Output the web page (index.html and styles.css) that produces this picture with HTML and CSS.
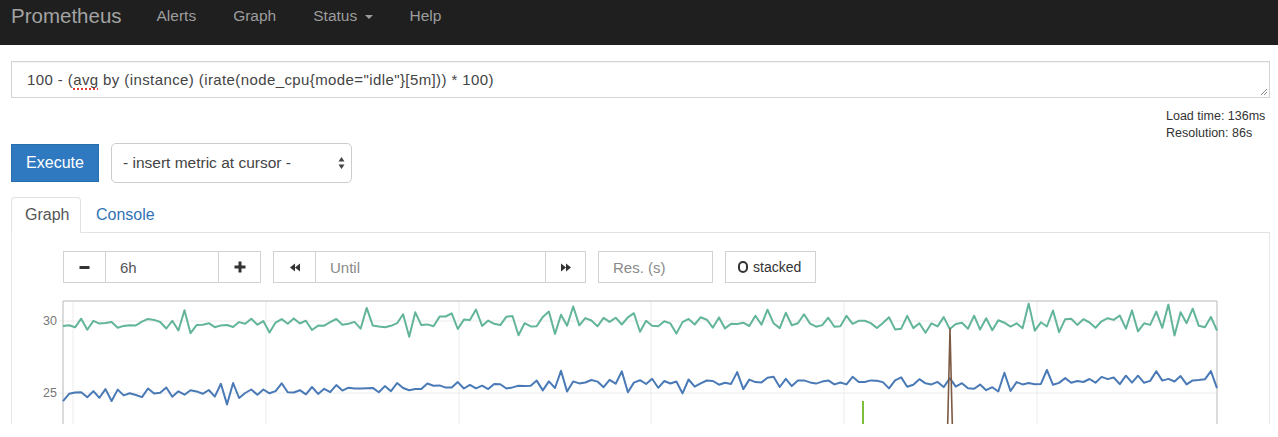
FILE: index.html
```html
<!DOCTYPE html>
<html>
<head>
<meta charset="utf-8">
<title>Prometheus Time Series Collection and Processing Server</title>
<link rel="stylesheet" href="styles.css">
</head>
<body>
<div class="page">
  <nav class="navbar">
    <a class="brand">Prometheus</a>
    <ul class="nav">
      <li>Alerts</li>
      <li>Graph</li>
      <li>Status <span class="caret"></span></li>
      <li>Help</li>
    </ul>
  </nav>
  <main class="container">
    <div class="expr">100 - (<span class="spell">avg</span>&nbsp;by (instance) (irate(node_cpu{mode="idle"}[5m])) * 100)<svg class="grip" width="7" height="7" viewBox="0 0 7 7"><path d="M1 7 L7 1 M4 7 L7 4" stroke="#888" stroke-width="1"/></svg></div>
    <div class="meta-row"><div class="meta">Load time: 136ms<br>Resolution: 86s</div></div>
    <div class="exec-row">
      <button class="btn-exec">Execute</button>
      <div class="select"><span>- insert metric at cursor -</span><svg class="arrows" width="7" height="14" viewBox="0 0 7 14"><path d="M3.5 1 L6.5 5.5 L0.5 5.5 Z M3.5 13 L6.5 8.5 L0.5 8.5 Z" fill="#444"/></svg></div>
    </div>
    <div class="tabs">
      <div class="tab active">Graph</div>
      <div class="tab link">Console</div>
    </div>
    <div class="panel">
      <div class="controls">
        <div class="group">
          <span class="btn sq"><svg width="11" height="11" viewBox="0 0 11 11"><rect x="0.5" y="4" width="10" height="3" fill="#333"/></svg></span>
          <span class="field range">6h</span>
          <span class="btn sq"><svg width="12" height="12" viewBox="0 0 12 12"><path d="M4.5 0.5h3v4h4v3h-4v4h-3v-4h-4v-3h4z" fill="#333"/></svg></span>
        </div>
        <div class="group">
          <span class="btn sq back"><svg width="10" height="9" viewBox="0 0 10 9"><path d="M0 4.5 L5 0.5 V8.5 Z M5 4.5 L10 0.5 V8.5 Z" fill="#333"/></svg></span>
          <span class="field until ph">Until</span>
          <span class="btn sq fwd"><svg width="10" height="9" viewBox="0 0 10 9"><path d="M10 4.5 L5 0.5 V8.5 Z M5 4.5 L0 0.5 V8.5 Z" fill="#333"/></svg></span>
        </div>
        <span class="field res ph">Res. (s)</span>
        <span class="btn stacked"><svg width="10" height="12" viewBox="0 0 10 12"><rect x="1" y="1" width="8" height="10" rx="4" fill="none" stroke="#333" stroke-width="2"/></svg>stacked</span>
      </div>
      <div class="graph">
        <svg id="chart" width="1195" height="140" viewBox="0 0 1195 140">
          <g class="grid">
            <line x1="43" y1="8" x2="43" y2="140"/>
            <line x1="236" y1="8" x2="236" y2="140"/>
            <line x1="429" y1="8" x2="429" y2="140"/>
            <line x1="621" y1="8" x2="621" y2="140"/>
            <line x1="814" y1="8" x2="814" y2="140"/>
            <line x1="1007" y1="8" x2="1007" y2="140"/>
            <line x1="29" y1="28" x2="1187" y2="28"/>
            <line x1="29" y1="100" x2="1187" y2="100"/>
          </g>
          <g class="frame">
            <line x1="33" y1="8" x2="1187" y2="8"/>
            <line x1="33" y1="8" x2="33" y2="140"/>
            <line x1="1187" y1="8" x2="1187" y2="140"/>
          </g>
          <text class="ylabel" x="27" y="32">30</text>
          <text class="ylabel" x="27" y="104">25</text>
          <polyline id="s-blue" class="series blue" points=""/>
          <polyline id="s-green" class="series green" points=""/>
          <polyline class="series lime" points="833,108 833,140"/>
          <polyline class="series brown" points="917.5,140 920,36 922.5,140"/>
        </svg>
      </div>
    </div>
  </main>
</div>
<script src="script.js"></script>
</body>
</html>
```

FILE: styles.css
```css
* { box-sizing: border-box; }
html, body { margin: 0; padding: 0; background: #fff; }
body {
  font-family: "Liberation Sans", Arial, Helvetica, sans-serif;
  color: #333;
  font-size: 14px;
}
.page { height: 424px; overflow: hidden; }

.navbar {
  height: 45px;
  background: #1f1f1f;
  display: flex;
  align-items: flex-start;
  padding: 4px 0 0 11px;
  color: #9d9d9d;
}
.brand { font-size: 20.5px; line-height: 24px; color: #a3a3a3; }
.nav {
  list-style: none;
  margin: 2px 0 0 35px;
  padding: 0;
  display: flex;
  gap: 37px;
  font-size: 15.5px;
  line-height: 20px;
}
.caret {
  display: inline-block;
  width: 0; height: 0;
  margin-left: 3px;
  vertical-align: middle;
  border-top: 4px solid #9d9d9d;
  border-left: 4px solid transparent;
  border-right: 4px solid transparent;
}

.container { padding: 16px 8px 0 11px; }

.expr {
  position: relative;
  height: 37px;
  border: 1px solid #d4d4d4;
  box-shadow: inset 0 1px 1px rgba(0,0,0,.05);
  display: flex;
  align-items: center;
  padding: 0 15px;
  font-size: 15px;
  letter-spacing: 0.4px;
  color: #444;
  white-space: pre;
}
.spell {
  text-decoration: underline dotted #e03a3a;
  text-decoration-thickness: 2px;
  text-underline-offset: 3px;
}
.grip { position: absolute; right: 2px; bottom: 2px; }

.meta-row { display: flex; justify-content: flex-end; margin-top: 10px; }
.meta { width: 104px; font-size: 12.5px; line-height: 17px; color: #333; }

.exec-row { display: flex; align-items: center; gap: 12px; margin-top: 1px; height: 40px; }
.btn-exec {
  width: 88px; height: 38px;
  background: #2f79c0;
  border: 1px solid #2a6dad;
  color: #fff;
  font-family: inherit;
  font-size: 16px;
  padding: 0;
}
.select {
  width: 241px; height: 40px;
  border: 1px solid #ccc;
  border-radius: 5px;
  display: flex;
  align-items: center;
  justify-content: space-between;
  padding: 0 6px 0 11px;
  font-size: 15.5px;
  color: #444;
  background: #fff;
}

.tabs {
  margin-top: 14px;
  display: flex;
  height: 36px;
  border-bottom: 1px solid #e2e2e2;
}
.tab {
  height: 36px;
  padding: 0 13px;
  display: flex;
  align-items: center;
  font-size: 16px;
  border: 1px solid transparent;
  border-radius: 4px 4px 0 0;
}
.tab.active {
  width: 70px;
  border-color: #e2e2e2 #e2e2e2 #fff;
  color: #555;
  background: #fff;
}
.tab.link { color: #3273b5; padding-left: 14px; }

.panel {
  border: 1px solid #e6e6e6;
  border-top: none;
  height: 300px;
  padding-top: 18px;
}
.controls { display: flex; margin-left: 51px; gap: 12px; height: 32px; }
.group { display: flex; }
.btn, .field {
  height: 32px;
  border: 1px solid #d2d2d2;
  display: flex;
  align-items: center;
  background: #fff;
}
.group > * + * { margin-left: -1px; }
.btn.sq { width: 43px; justify-content: center; }
.btn.back { width: 43px; }
.btn.fwd { width: 41px; }
.field { padding: 0 14px; font-size: 15px; color: #555; }
.field.range { width: 114px; }
.field.until { width: 231px; }
.field.res { width: 115px; }
.ph { color: #8a8a8a; }
.btn.stacked {
  width: 91px;
  padding-left: 12px;
  font-size: 14px;
  color: #333;
  gap: 5px;
}

.graph { margin: 10px 0 0 18px; }
#chart { display: block; }
.grid line { stroke: #ececec; stroke-width: 1; }
.frame line { stroke: #cfcfcf; stroke-width: 1.5; }
.ylabel { font-family: "Liberation Sans", Arial, sans-serif; font-size: 12.5px; fill: #777; text-anchor: end; }
.series { fill: none; stroke-width: 2; stroke-linejoin: round; }
.series.green { stroke: #62b49b; }
.series.blue { stroke: #4a7ab6; }
.series.lime { stroke: #7cbd3c; }
.series.brown { stroke: #7d5a43; stroke-width: 1.6; }
```

FILE: script.js
```js
(function () {
  var seed = 12345;
  function r() {
    seed = (seed * 1103515245 + 12345) & 0x7fffffff;
    return seed / 0x7fffffff;
  }
  function interp(pts, x) {
    for (var i = 0; i < pts.length - 1; i++) {
      if (x <= pts[i + 1][0]) {
        var t = (x - pts[i][0]) / (pts[i + 1][0] - pts[i][0]);
        return pts[i][1] + t * (pts[i + 1][1] - pts[i][1]);
      }
    }
    return pts[pts.length - 1][1];
  }
  var x0 = 33, x1 = 1187, n = 190;
  var dx = (x1 - x0) / n;

  var gBase = [[33, 31], [300, 30], [600, 30], [900, 30], [1187, 30]];
  var bBase = [[33, 101], [240, 99], [420, 93], [620, 90], [820, 88], [910, 90], [950, 94], [1000, 89], [1187, 86]];

  var g = [], b = [], prevG = 0, prevB = 0;
  for (var i = 0; i <= n; i++) {
    var x = x0 + i * dx;
    var ng = (r() - 0.5) * 12 - 0.45 * prevG;
    var s = r();
    if (s < 0.09) ng -= 7 + r() * 7;
    else if (s > 0.92) ng += 5 + r() * 4;
    prevG = ng;
    var yg = interp(gBase, x) + ng;
    if (Math.abs(x - 920) < 4) yg = 36;
    g.push(x.toFixed(1) + "," + yg.toFixed(1));

    var nb = (r() - 0.5) * 8 - 0.45 * prevB;
    var s2 = r();
    if (s2 < 0.08) nb -= 5 + r() * 4;
    else if (s2 > 0.94) nb += 4 + r() * 3;
    prevB = nb;
    var yb = interp(bBase, x) + nb;
    b.push(x.toFixed(1) + "," + yb.toFixed(1));
  }
  document.getElementById("s-green").setAttribute("points", g.join(" "));
  document.getElementById("s-blue").setAttribute("points", b.join(" "));
})();
```
